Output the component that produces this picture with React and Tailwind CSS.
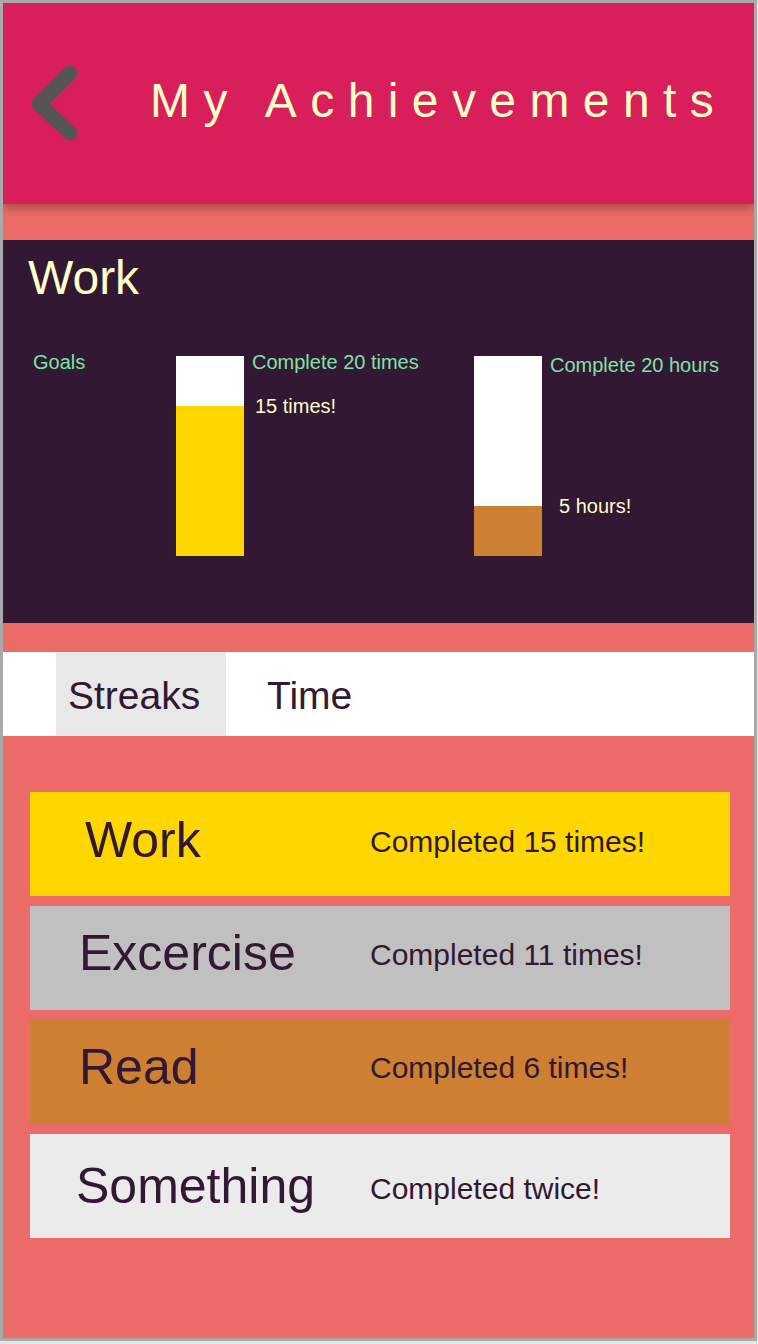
import React from 'react';

const font = { fontFamily: '"Liberation Sans", Arial, sans-serif' };

const streaks = [
  { name: 'Work', text: 'Completed 15 times!', bg: 'bg-[#FFD700]', namePad: 'pl-[55px] pt-[23px]', textPad: 'pt-[35px]' },
  { name: 'Excercise', text: 'Completed 11 times!', bg: 'bg-[#C0C0C0]', namePad: 'pl-[49px] pt-[22px]', textPad: 'pt-[34px]' },
  { name: 'Read', text: 'Completed 6 times!', bg: 'bg-[#CD7F32]', namePad: 'pl-[49px] pt-[22px]', textPad: 'pt-[33px]' },
  { name: 'Something', text: 'Completed twice!', bg: 'bg-[#EBEBEB]', namePad: 'pl-[46px] pt-[27px]', textPad: 'pt-[40px]' },
];

const BackIcon = () => (
  <svg width="56" height="84" viewBox="0 0 56 84" className="ml-[22px] shrink-0">
    <polyline
      points="45,11 14,42 45,71"
      fill="none"
      stroke="#555555"
      strokeWidth="14.5"
      strokeLinecap="round"
      strokeLinejoin="round"
    />
  </svg>
);

const GoalBar = ({ fill, color }) => (
  <div className="mt-[4px] w-[68px] h-[200px] bg-white flex flex-col justify-end shrink-0">
    <div className={color} style={{ height: `${fill * 100}%` }} />
  </div>
);

export default function App() {
  return (
    <div className="w-[758px] h-[1344px] bg-[#e6e6e6]" style={font}>
      <div className="w-[757px] h-[1341px] border-[3px] border-[#a9a9a9] bg-[#EB6B69] overflow-hidden">
        {/* Header */}
        <div className="relative z-10 h-[201px] bg-[#D81F5B] flex items-center shadow-[0_5px_8px_rgba(0,0,0,0.25)]">
          <BackIcon />
          <h1 className="ml-[69px] mb-[5px] text-[48px] leading-none tracking-[13.4px] text-[#FFFFC7] whitespace-nowrap">
            My Achievements
          </h1>
        </div>

        {/* Work goals panel */}
        <div className="mt-[36px] h-[383px] bg-[#321832] pt-[14px]">
          <h2 className="pl-[25px] text-[48px] leading-none text-[#FFFFC7]">Work</h2>
          <div className="mt-[50px] flex items-start pl-[30px] text-[20px] leading-none">
            <div className="w-[143px] text-[#7DE3A5] shrink-0">Goals</div>
            <GoalBar fill={0.75} color="bg-[#FFD700]" />
            <div className="w-[230px] shrink-0 flex flex-col">
              <span className="pl-[8px] text-[#7DE3A5] whitespace-nowrap">Complete 20 times</span>
              <span className="pl-[11px] mt-[24px] text-[#FFFFC7] whitespace-nowrap">15 times!</span>
            </div>
            <GoalBar fill={0.25} color="bg-[#CD7F32]" />
            <div className="flex flex-col">
              <span className="pl-[8px] mt-[3px] text-[#7DE3A5] whitespace-nowrap">Complete 20 hours</span>
              <span className="pl-[17px] mt-[121px] text-[#FFFFC7] whitespace-nowrap">5 hours!</span>
            </div>
          </div>
        </div>

        {/* Tabs */}
        <div className="mt-[29px] h-[84px] bg-white flex text-[39px] text-[#321832]">
          <div className="ml-[53px] w-[170px] bg-[#E8E8E8] flex items-center pl-[12px] pt-[4px]">Streaks</div>
          <div className="ml-[41px] flex items-center pt-[4px]">Time</div>
        </div>

        {/* Streak list */}
        <div className="mt-[56px] ml-[27px] w-[700px] flex flex-col gap-[10px]">
          {streaks.map((s) => (
            <div key={s.name} className={`h-[104px] ${s.bg} grid grid-cols-[340px_1fr] text-[#321832]`}>
              <div className={`${s.namePad} text-[50px] leading-none whitespace-nowrap`}>{s.name}</div>
              <div className={`${s.textPad} text-[30px] leading-none whitespace-nowrap`}>{s.text}</div>
            </div>
          ))}
        </div>
      </div>
    </div>
  );
}
